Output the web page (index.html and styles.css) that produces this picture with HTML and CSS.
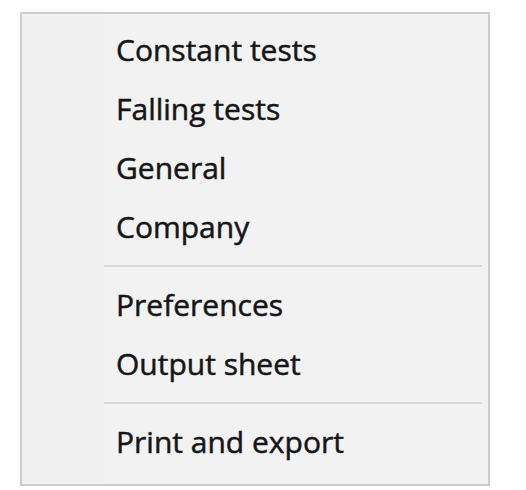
FILE: index.html
```html
<!DOCTYPE html>
<html>
<head>
<meta charset="utf-8">
<link rel="stylesheet" href="styles.css">
</head>
<body>
<div class="menu">
  <div class="item">Constant tests</div>
  <div class="item">Falling tests</div>
  <div class="item">General</div>
  <div class="item">Company</div>
  <div class="sep"></div>
  <div class="item">Preferences</div>
  <div class="item">Output sheet</div>
  <div class="sep"></div>
  <div class="item">Print and export</div>
</div>
</body>
</html>
```
FILE: styles.css
```css
html, body {
  margin: 0;
  padding: 0;
  background: #ffffff;
}
body {
  padding: 12px 0 0 20px;
  font-family: "Open Sans", "Noto Sans", sans-serif;
}
.menu {
  width: 466px;
  height: 464px;
  border: 2px solid #cccccc;
  background: linear-gradient(to right, #f0f0f0 0, #f0f0f0 82px, #f2f2f2 82px);
  padding-top: 6px;
  box-sizing: content-box;
}
.item {
  height: 59px;
  line-height: 59px;
  padding-left: 94px;
  font-size: 30px;
  color: #161616;
  -webkit-text-stroke: 0.5px #161616;
}
.sep {
  height: 2px;
  background: #d8d8d8;
  margin: 9px 6px 8px 82px;
}
```
